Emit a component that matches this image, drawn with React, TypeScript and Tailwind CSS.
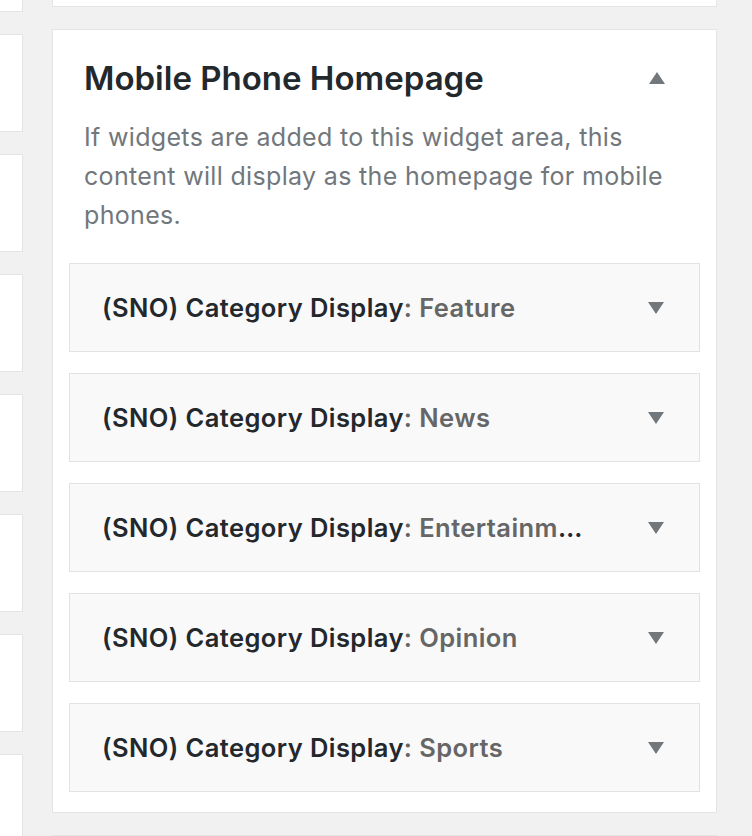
import { ReactNode } from "react";

const widgets = ["Feature", "News", "Entertainment", "Opinion", "Sports"];

function Triangle({ up }: { up?: boolean }) {
  return (
    <svg width="16" height="12" viewBox="0 0 16 12" className="shrink-0">
      <path d={up ? "M8 0 L16 12 L0 12 Z" : "M0 0 L16 0 L8 12 Z"} fill="#72777c" />
    </svg>
  );
}

function SideBox({ children }: { children?: ReactNode }) {
  return <div className="h-[98px] shrink-0 bg-white border border-[#e5e5e5]">{children}</div>;
}

export default function App() {
  return (
    <main
      className="w-[752px] h-[836px] overflow-hidden bg-[#f1f1f1] flex items-start"
      style={{ fontFamily: "Inter, 'Noto Sans', sans-serif" }}
    >
      {/* --- left column (cut off) --- */}
      <div className="w-[23px] shrink-0 flex flex-col gap-[22px] -mt-[86px] overflow-hidden">
        {Array.from({ length: 8 }).map((_, i) => (
          <div key={i} className="-ml-[200px] shrink-0">
            <SideBox />
          </div>
        ))}
      </div>

      {/* --- widget areas --- */}
      <div className="ml-[29px] w-[665px] shrink-0 flex flex-col">
        <div className="h-[40px] shrink-0 -mt-[33px] bg-white border border-[#e5e5e5]" />

        <section className="shrink-0 mt-[22px] bg-white border border-[#e5e5e5] pb-[20px]">
          <div className="flex items-center justify-between pl-[31px] pr-[51px] pt-[28px] h-[68px]">
            <h3 className="text-[33px] leading-[40px] font-semibold text-[#23282d]">
              Mobile Phone Homepage
            </h3>
            <Triangle up />
          </div>
          <p className="pl-[31px] pr-[36px] mt-[20px] text-[25px] leading-[39px] tracking-[0.33px] text-[#72777c]">
            If widgets are added to this widget area, this content will display as the homepage for mobile phones.
          </p>

          <div className="mt-[28px] px-[16px] flex flex-col gap-[21px]">
            {widgets.map((w) => (
              <div
                key={w}
                className="h-[89px] shrink-0 bg-[#f9f9f9] border border-[#e2e2e2] flex items-center pl-[32px] pr-[35px]"
              >
                <div className="flex-1 min-w-0 truncate pt-[2px] pr-[60px] text-[25.5px] tracking-[0.42px] font-semibold text-[#23282d]">
                  (SNO) Category Display<span className="text-[#666]">: {w}</span>
                </div>
                <Triangle />
              </div>
            ))}
          </div>
        </section>

        <div className="shrink-0 mt-[22px] h-[40px] bg-white border border-[#e5e5e5]" />
      </div>
    </main>
  );
}
